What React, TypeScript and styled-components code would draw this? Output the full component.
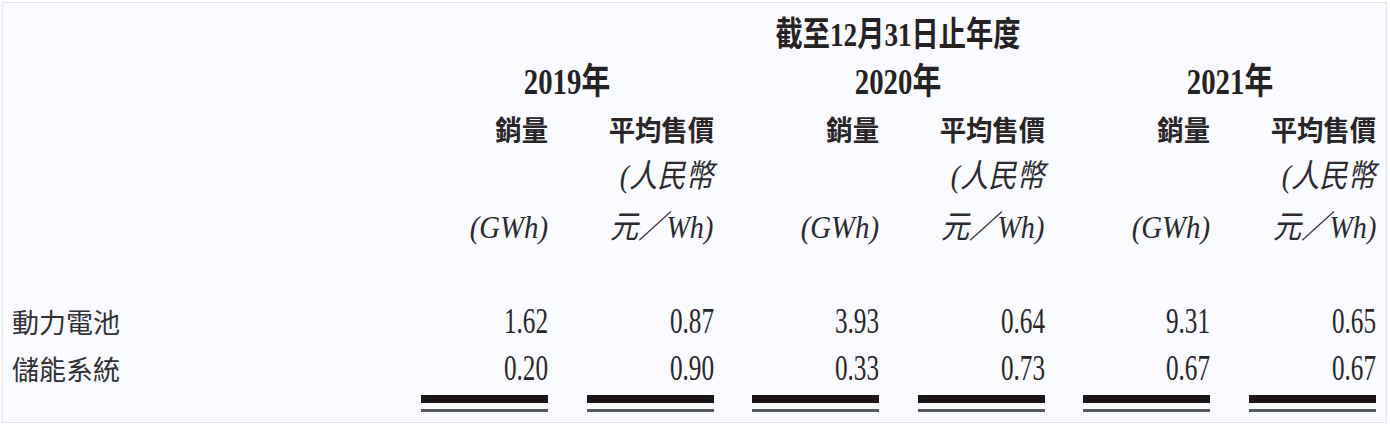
import React from "react";
import styled, { createGlobalStyle } from "styled-components";

const GlobalStyle = createGlobalStyle`
  html, body {
    margin: 0;
    padding: 0;
    background: #ffffff;
  }
  body {
    font-family: "Liberation Serif", "Noto Sans CJK TC", serif;
    color: #262224;
  }
`;

const Frame = styled.div`
  box-sizing: border-box;
  width: 1385px;
  height: 421px;
  margin: 2px 3px 3px 2px;
  border: 1px solid #e1e6ec;
  background: #f9fbfe;
  padding-top: 9px;
  display: flex;
  flex-direction: column;
  overflow: hidden;
`;

const Row = styled.div<{ $h: number; $mt?: number }>`
  display: grid;
  grid-template-columns: 379.4px repeat(6, 127px);
  column-gap: 38.6px;
  height: ${(p) => p.$h}px;
  margin-top: ${(p) => p.$mt ?? 0}px;
  align-items: center;
`;

const Cell = styled.div<{ $span?: number; $start?: number; $align?: "left" | "right" | "center" }>`
  grid-column: ${(p) => (p.$start ? `${p.$start} / span ${p.$span ?? 1}` : `auto / span ${p.$span ?? 1}`)};
  display: flex;
  justify-content: ${(p) =>
    p.$align === "left" ? "flex-start" : p.$align === "center" ? "center" : "flex-end"};
  white-space: nowrap;
  line-height: 1;
`;

const Squeeze = styled.span<{ $sx: number; $origin?: string }>`
  display: inline-block;
  transform: scaleX(${(p) => p.$sx});
  transform-origin: ${(p) => p.$origin ?? "right"} center;
`;

const Title = styled(Squeeze)`
  font-family: "Liberation Serif", "Noto Sans CJK TC", serif;
  font-weight: 700;
  font-size: 34px;
`;

const Year = styled(Squeeze)`
  font-family: "Liberation Serif", "Noto Sans CJK TC", serif;
  font-weight: 700;
  font-size: 36px;
`;

const SubHead = styled(Squeeze)`
  font-family: "Noto Sans CJK TC", sans-serif;
  font-weight: 700;
  font-size: 28px;
  color: #2a2527;
`;

const Unit = styled(Squeeze)`
  font-family: "Liberation Serif", "Noto Sans CJK TC", serif;
  font-style: italic;
  font-weight: 400;
  font-size: 32px;
  color: #2c2a2e;
`;

const Label = styled.span`
  font-family: "Noto Sans CJK TC", sans-serif;
  font-weight: 400;
  font-size: 27px;
  color: #313035;
  padding-left: 9px;
`;

const Num = styled(Squeeze)`
  font-family: "Liberation Serif", serif;
  font-size: 36px;
  color: #2a2628;
`;

const DoubleRule = styled.div`
  width: 100%;
  display: flex;
  flex-direction: column;
  gap: 6px;
  &::before {
    content: "";
    height: 8px;
    background: #1e1518;
  }
  &::after {
    content: "";
    height: 3px;
    background: #555860;
  }
`;

const years = [
  { year: "2019", col: 2 },
  { year: "2020", col: 4 },
  { year: "2021", col: 6 },
];

const data = [
  { label: "動力電池", values: ["1.62", "0.87", "3.93", "0.64", "9.31", "0.65"] },
  { label: "儲能系統", values: ["0.20", "0.90", "0.33", "0.73", "0.67", "0.67"] },
];

export default function App() {
  return (
    <>
      <GlobalStyle />
      <Frame>
        <Row $h={46}>
          <Cell $start={4} $span={2} $align="center">
            <Title $sx={0.8} $origin="center">截至12月31日止年度</Title>
          </Cell>
        </Row>
        <Row $h={48}>
          {years.map((y) => (
            <Cell key={y.year} $start={y.col} $span={2} $align="center">
              <Year $sx={0.8} $origin="center">
                {y.year}年
              </Year>
            </Cell>
          ))}
        </Row>
        <Row $h={46}>
          {years.map((y) => (
            <React.Fragment key={y.year}>
              <Cell $start={y.col}>
                <SubHead $sx={0.94}>銷量</SubHead>
              </Cell>
              <Cell $start={y.col + 1}>
                <SubHead $sx={0.94}>平均售價</SubHead>
              </Cell>
            </React.Fragment>
          ))}
        </Row>
        <Row $h={48}>
          {years.map((y) => (
            <Cell key={y.year} $start={y.col + 1}>
              <Unit $sx={0.88}>(人民幣</Unit>
            </Cell>
          ))}
        </Row>
        <Row $h={54}>
          {years.map((y) => (
            <React.Fragment key={y.year}>
              <Cell $start={y.col}>
                <Unit $sx={0.9}>(GWh)</Unit>
              </Cell>
              <Cell $start={y.col + 1}>
                <Unit $sx={0.88}>元／Wh)</Unit>
              </Cell>
            </React.Fragment>
          ))}
        </Row>
        {data.map((r, i) => (
          <Row key={r.label} $h={i === 0 ? 48 : 46} $mt={i === 0 ? 43 : 0}>
            <Cell $align="left">
              <Label>{r.label}</Label>
            </Cell>
            {r.values.map((v, j) => (
              <Cell key={j}>
                <Num $sx={0.7}>{v}</Num>
              </Cell>
            ))}
          </Row>
        ))}
        <Row $h={17} $mt={4}>
          <span />
          {[0, 1, 2, 3, 4, 5].map((k) => (
            <DoubleRule key={k} />
          ))}
        </Row>
      </Frame>
    </>
  );
}
